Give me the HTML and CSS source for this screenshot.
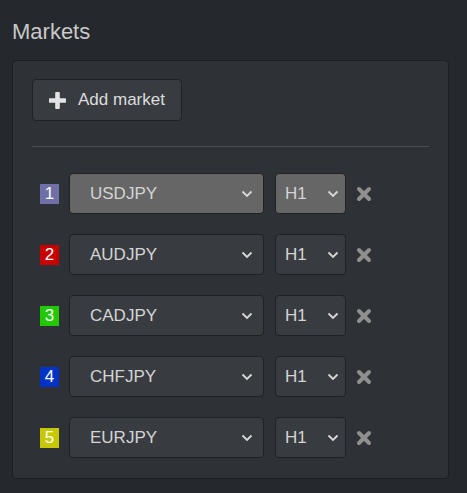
FILE: index.html
```html
<!DOCTYPE html>
<html lang="en">
<head>
<meta charset="UTF-8" />
<meta name="viewport" content="width=device-width, initial-scale=1.0"/>
<title>Markets</title>
<link rel="stylesheet" href="styles.css">
</head>
<body>

<h2 class="title">Markets</h2>

<div class="panel">
  <button class="add-btn">
    <svg class="plus" width="17" height="17" viewBox="0 0 17 17"><path d="M8.5 1.5v14M1.5 8.5h14" stroke="#e2e2e2" stroke-width="4.6" stroke-linecap="round"/></svg>
    Add market
  </button>

  <hr class="sep">

  <div class="rows">
    <div class="row">
      <span class="badge b1">1</span>
      <div class="select market active"><span>USDJPY</span><svg width="12" height="8" viewBox="0 0 12 8"><path d="M1.5 1.5l4.5 4.5 4.5-4.5" fill="none" stroke="#d8d8d8" stroke-width="1.8"/></svg></div>
      <div class="select tf active"><span>H1</span><svg width="12" height="8" viewBox="0 0 12 8"><path d="M1.5 1.5l4.5 4.5 4.5-4.5" fill="none" stroke="#d8d8d8" stroke-width="1.8"/></svg></div>
      <svg class="remove" width="16" height="16" viewBox="0 0 16 16"><path d="M3 3l10 10M13 3L3 13" stroke="#8f8f8f" stroke-width="4" stroke-linecap="round"/></svg>
    </div>
    <div class="row">
      <span class="badge b2">2</span>
      <div class="select market"><span>AUDJPY</span><svg width="12" height="8" viewBox="0 0 12 8"><path d="M1.5 1.5l4.5 4.5 4.5-4.5" fill="none" stroke="#d8d8d8" stroke-width="1.8"/></svg></div>
      <div class="select tf"><span>H1</span><svg width="12" height="8" viewBox="0 0 12 8"><path d="M1.5 1.5l4.5 4.5 4.5-4.5" fill="none" stroke="#d8d8d8" stroke-width="1.8"/></svg></div>
      <svg class="remove" width="16" height="16" viewBox="0 0 16 16"><path d="M3 3l10 10M13 3L3 13" stroke="#8f8f8f" stroke-width="4" stroke-linecap="round"/></svg>
    </div>
    <div class="row">
      <span class="badge b3">3</span>
      <div class="select market"><span>CADJPY</span><svg width="12" height="8" viewBox="0 0 12 8"><path d="M1.5 1.5l4.5 4.5 4.5-4.5" fill="none" stroke="#d8d8d8" stroke-width="1.8"/></svg></div>
      <div class="select tf"><span>H1</span><svg width="12" height="8" viewBox="0 0 12 8"><path d="M1.5 1.5l4.5 4.5 4.5-4.5" fill="none" stroke="#d8d8d8" stroke-width="1.8"/></svg></div>
      <svg class="remove" width="16" height="16" viewBox="0 0 16 16"><path d="M3 3l10 10M13 3L3 13" stroke="#8f8f8f" stroke-width="4" stroke-linecap="round"/></svg>
    </div>
    <div class="row">
      <span class="badge b4">4</span>
      <div class="select market"><span>CHFJPY</span><svg width="12" height="8" viewBox="0 0 12 8"><path d="M1.5 1.5l4.5 4.5 4.5-4.5" fill="none" stroke="#d8d8d8" stroke-width="1.8"/></svg></div>
      <div class="select tf"><span>H1</span><svg width="12" height="8" viewBox="0 0 12 8"><path d="M1.5 1.5l4.5 4.5 4.5-4.5" fill="none" stroke="#d8d8d8" stroke-width="1.8"/></svg></div>
      <svg class="remove" width="16" height="16" viewBox="0 0 16 16"><path d="M3 3l10 10M13 3L3 13" stroke="#8f8f8f" stroke-width="4" stroke-linecap="round"/></svg>
    </div>
    <div class="row">
      <span class="badge b5">5</span>
      <div class="select market"><span>EURJPY</span><svg width="12" height="8" viewBox="0 0 12 8"><path d="M1.5 1.5l4.5 4.5 4.5-4.5" fill="none" stroke="#d8d8d8" stroke-width="1.8"/></svg></div>
      <div class="select tf"><span>H1</span><svg width="12" height="8" viewBox="0 0 12 8"><path d="M1.5 1.5l4.5 4.5 4.5-4.5" fill="none" stroke="#d8d8d8" stroke-width="1.8"/></svg></div>
      <svg class="remove" width="16" height="16" viewBox="0 0 16 16"><path d="M3 3l10 10M13 3L3 13" stroke="#8f8f8f" stroke-width="4" stroke-linecap="round"/></svg>
    </div>
  </div>
</div>

</body>
</html>
```

FILE: styles.css
```css
body {
  margin: 0;
  padding: 0 12px;
  background: #25282c;
  font-family: "Liberation Sans", Arial, sans-serif;
  color: #d2d2d2;
}

/* заголовок */
.title {
  margin: 0;
  padding-top: 19px;
  height: 60px;
  box-sizing: border-box;
  font-size: 22px;
  font-weight: normal;
  line-height: 25px;
  color: #c9c9c9;
}

/* панель */
.panel {
  width: 437px;
  box-sizing: border-box;
  background: #2e3236;
  border: 1px solid #1c1e21;
  border-radius: 4px;
  padding: 18px 19px 20px;
}

.add-btn {
  display: flex;
  align-items: center;
  gap: 12px;
  height: 42px;
  padding: 0 16px;
  background: #383c40;
  border: 1px solid #1f2124;
  border-radius: 4px;
  color: #dcdcdc;
  font-family: inherit;
  font-size: 17px;
}

.sep {
  margin: 25px 0 0;
  border: none;
  border-top: 1px solid #4a4e53;
}

.rows {
  display: flex;
  flex-direction: column;
  gap: 20px;
  padding: 26px 0 0 8px;
}

.row {
  display: flex;
  align-items: center;
  height: 41px;
}

.badge {
  width: 19px;
  height: 20px;
  margin-right: 10px;
  color: #fff;
  font-size: 17px;
  line-height: 20px;
  text-align: center;
}
.b1 { background: #6f70a8; }
.b2 { background: #c80000; }
.b3 { background: #22c800; }
.b4 { background: #0032c8; }
.b5 { background: #c8c800; }

/* псевдо-селекты */
.select {
  display: flex;
  align-items: center;
  justify-content: space-between;
  height: 41px;
  box-sizing: border-box;
  background: #383c40;
  border: 1px solid #1f2124;
  border-radius: 4px;
  font-size: 17px;
  color: #d4d4d4;
}
.select.active {
  background: #666666;
}

.market {
  width: 195px;
  padding: 0 10px 0 20px;
}

.tf {
  width: 71px;
  margin-left: 11px;
  padding: 0 6px 0 9px;
}

.remove {
  margin-left: 10px;
}
```
